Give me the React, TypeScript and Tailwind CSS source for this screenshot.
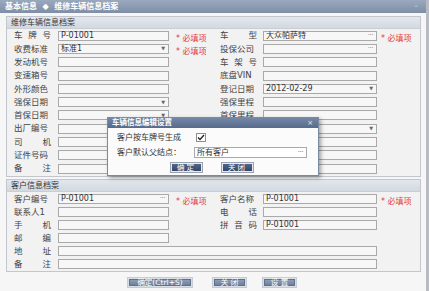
import React from "react";

const FONT = { fontFamily: '"DejaVu Sans", "Noto Sans CJK SC", sans-serif' };

function Label({ text }: { text: string }) {
  const chars = Array.from(text);
  if (chars.length >= 4 || chars.length === 0) {
    return <div className="w-[37px] shrink-0 whitespace-nowrap text-[8.5px] leading-none text-[#444]">{text}</div>;
  }
  return (
    <div className="flex w-[37px] shrink-0 justify-between text-[8.5px] leading-none text-[#444]">
      {chars.map((c, i) => (
        <span key={i}>{c}</span>
      ))}
    </div>
  );
}

function Input({ w, value, kind }: { w: string; value?: string; kind?: "drop" | "more" }) {
  return (
    <div
      className={`${w} flex h-[10px] shrink-0 items-center justify-between border border-[#a9a9a9] bg-[#f7f7f7] pl-[2px] pr-[3px] text-[8px] leading-none text-[#333]`}
    >
      <span className="whitespace-nowrap">{value ?? ""}</span>
      {kind === "drop" && <span className="text-[5px] text-[#666]">▼</span>}
      {kind === "more" && <span className="text-[7px] leading-none tracking-[-0.5px] text-[#777]">···</span>}
    </div>
  );
}

function Req() {
  return <span className="whitespace-nowrap text-[8px] leading-none text-[#e23b3b]">*&nbsp;必填项</span>;
}

type Cell = { label: string; value?: string; kind?: "drop" | "more"; req?: boolean };

function Row({ l, r, full, h }: { l: Cell; r?: Cell; full?: boolean; h: string }) {
  return (
    <div className={`flex ${h} items-center pl-[7px]`}>
      <Label text={l.label} />
      {full ? (
        <div className="ml-[7px]">
          <Input w="w-[319px]" value={l.value} kind={l.kind} />
        </div>
      ) : (
        <>
          <div className="ml-[7px]">
            <Input w="w-[111px]" value={l.value} kind={l.kind} />
          </div>
          <div className="w-[51px] shrink-0 pl-[7px]">{l.req && <Req />}</div>
          {r && (
            <>
              <Label text={r.label} />
              <div className="ml-[6px]">
                <Input w="w-[114px]" value={r.value} kind={r.kind} />
              </div>
              <div className="ml-[4px]">{r.req && <Req />}</div>
            </>
          )}
        </>
      )}
    </div>
  );
}

function PanelHeader({ text }: { text: string }) {
  return (
    <div className="flex h-[12px] items-center border-b border-[#c9ced6] bg-gradient-to-b from-[#e3e7ed] to-[#d3d9e1] pl-[4px] text-[8px] leading-none text-[#333]">
      {text}
    </div>
  );
}

function MainBtn({ text, w }: { text: string; w: string }) {
  return (
    <div className={`${w} flex h-[11px] items-center justify-center border border-[#c5ccd6] bg-[#d9dee5] p-[1px]`}>
      <div className="flex h-full w-full items-center justify-center border border-[#5f7090] bg-gradient-to-b from-[#8e9db4] to-[#6f809c] text-[7.5px] leading-none text-white">
        {text}
      </div>
    </div>
  );
}

function DlgBtn({ text }: { text: string }) {
  return (
    <div className="flex h-[11px] w-[33px] items-center justify-center border border-[#9aa3b0] bg-[#e6e9ee] p-[1px]">
      <div className="flex h-full w-full items-center justify-center bg-gradient-to-b from-[#516589] to-[#34476b] text-[7.5px] leading-none tracking-[2px] text-white">
        {text}
      </div>
    </div>
  );
}

export default function App() {
  const rowsA: { l: Cell; r?: Cell; full?: boolean }[] = [
    { l: { label: "车牌号", value: "P-01001", req: true }, r: { label: "车型", value: "大众帕萨特", kind: "more", req: true } },
    { l: { label: "收费标准", value: "标准1", kind: "drop", req: true }, r: { label: "投保公司", kind: "more" } },
    { l: { label: "发动机号" }, r: { label: "车架号" } },
    { l: { label: "变速箱号" }, r: { label: "底盘VIN" } },
    { l: { label: "外形颜色" }, r: { label: "登记日期", value: "2012-02-29", kind: "drop" } },
    { l: { label: "强保日期", kind: "drop" }, r: { label: "强保里程" } },
    { l: { label: "首保日期", kind: "drop" }, r: { label: "首保里程" } },
    { l: { label: "出厂编号" }, r: { label: "", kind: "drop" } },
    { l: { label: "司机" }, r: { label: "" } },
    { l: { label: "证件号码" }, r: { label: "" } },
    { l: { label: "备注" }, full: true },
  ];
  const rowsB: { l: Cell; r?: Cell; full?: boolean }[] = [
    { l: { label: "客户编号", value: "P-01001", kind: "more", req: true }, r: { label: "客户名称", value: "P-01001", req: true } },
    { l: { label: "联系人1" }, r: { label: "电话" } },
    { l: { label: "手机" }, r: { label: "拼音码", value: "P-01001" } },
    { l: { label: "邮编" } },
    { l: { label: "地址" }, full: true },
    { l: { label: "备注" }, full: true },
  ];

  return (
    <div className="relative h-[291px] w-[429px] overflow-hidden border-r-[3px] border-[#b8bcc2] bg-[#f6f6f6]" style={FONT}>
      {/* title bar */}
      <div className="flex h-[13px] items-center justify-between bg-gradient-to-b from-[#9aa9bd] to-[#7d8ea6] pl-[5px] pr-[8px] text-[8px] font-bold leading-none text-white">
        <span className="whitespace-nowrap">基本信息 &nbsp;◆&nbsp; 维修车辆信息档案</span>
        <span className="text-[7px] font-normal text-[#dfe4ea]">–</span>
      </div>

      {/* panel 1 */}
      <div className="ml-[6px] mt-[3px] w-[415px] border border-[#c3c7cd] bg-[#f2f2f2]">
        <PanelHeader text="维修车辆信息档案" />
        <div className="pb-[1px]">
          {rowsA.map((r, i) => (
            <Row key={i} l={r.l} r={r.r} full={r.full} h="h-[13.3px]" />
          ))}
        </div>
      </div>

      {/* panel 2 */}
      <div className="ml-[6px] mt-[2px] w-[415px] border border-[#c3c7cd] bg-[#f2f2f2]">
        <PanelHeader text="客户信息档案" />
        <div className="pb-[1px]">
          {rowsB.map((r, i) => (
            <Row key={i} l={r.l} r={r.r} full={r.full} h="h-[13px]" />
          ))}
        </div>
      </div>

      {/* bottom buttons */}
      <div className="mt-[5px] flex items-center pl-[127px]">
        <MainBtn text="确定(Ctrl+S)" w="w-[66px]" />
        <div className="ml-[19px]">
          <MainBtn text="关 闭" w="w-[35px]" />
        </div>
        <div className="ml-[15px]">
          <MainBtn text="设 置" w="w-[35px]" />
        </div>
      </div>

      {/* dialog */}
      <div className="absolute left-[107px] top-[117px] flex h-[59px] w-[212px] flex-col border border-[#7b8aa0] bg-white shadow-[2px_2px_4px_rgba(0,0,0,0.35)]">
        <div className="flex h-[10px] items-center justify-between bg-gradient-to-b from-[#7487a6] to-[#566a8c] pl-[4px] pr-[5px] text-[7.5px] font-bold leading-none text-white">
          <span>车辆信息编辑设置</span>
          <span className="text-[7px] font-normal text-[#e6e9ee]">×</span>
        </div>
        <div className="flex flex-1 flex-col bg-[#fbfbfb]">
          <div className="mt-[5px] flex h-[9px] items-center pl-[9px] text-[8px] leading-none text-[#333]">
            <span className="w-[79px]">客户按车牌号生成</span>
            <div className="flex h-[9px] w-[10px] items-center justify-center border border-[#8b8f96] bg-white">
              <svg width="8" height="7" viewBox="0 0 8 7">
                <path d="M1 3.5 L3 5.5 L7 1" fill="none" stroke="#222" strokeWidth="1.3" />
              </svg>
            </div>
          </div>
          <div className="mt-[5px] flex h-[11px] items-center pl-[9px] text-[8px] leading-none text-[#333]">
            <span className="w-[77px]">客户默认父结点：</span>
            <div className="flex h-[11px] w-[113px] items-center justify-between border border-[#a9a9a9] bg-white pl-[2px] pr-[3px]">
              <span>所有客户</span>
              <span className="text-[7px] tracking-[-0.5px] text-[#666]">···</span>
            </div>
          </div>
          <div className="mt-[4px] flex items-center pl-[62px]">
            <DlgBtn text="确定" />
            <div className="ml-[18px]">
              <DlgBtn text="关闭" />
            </div>
          </div>
        </div>
      </div>
    </div>
  );
}
